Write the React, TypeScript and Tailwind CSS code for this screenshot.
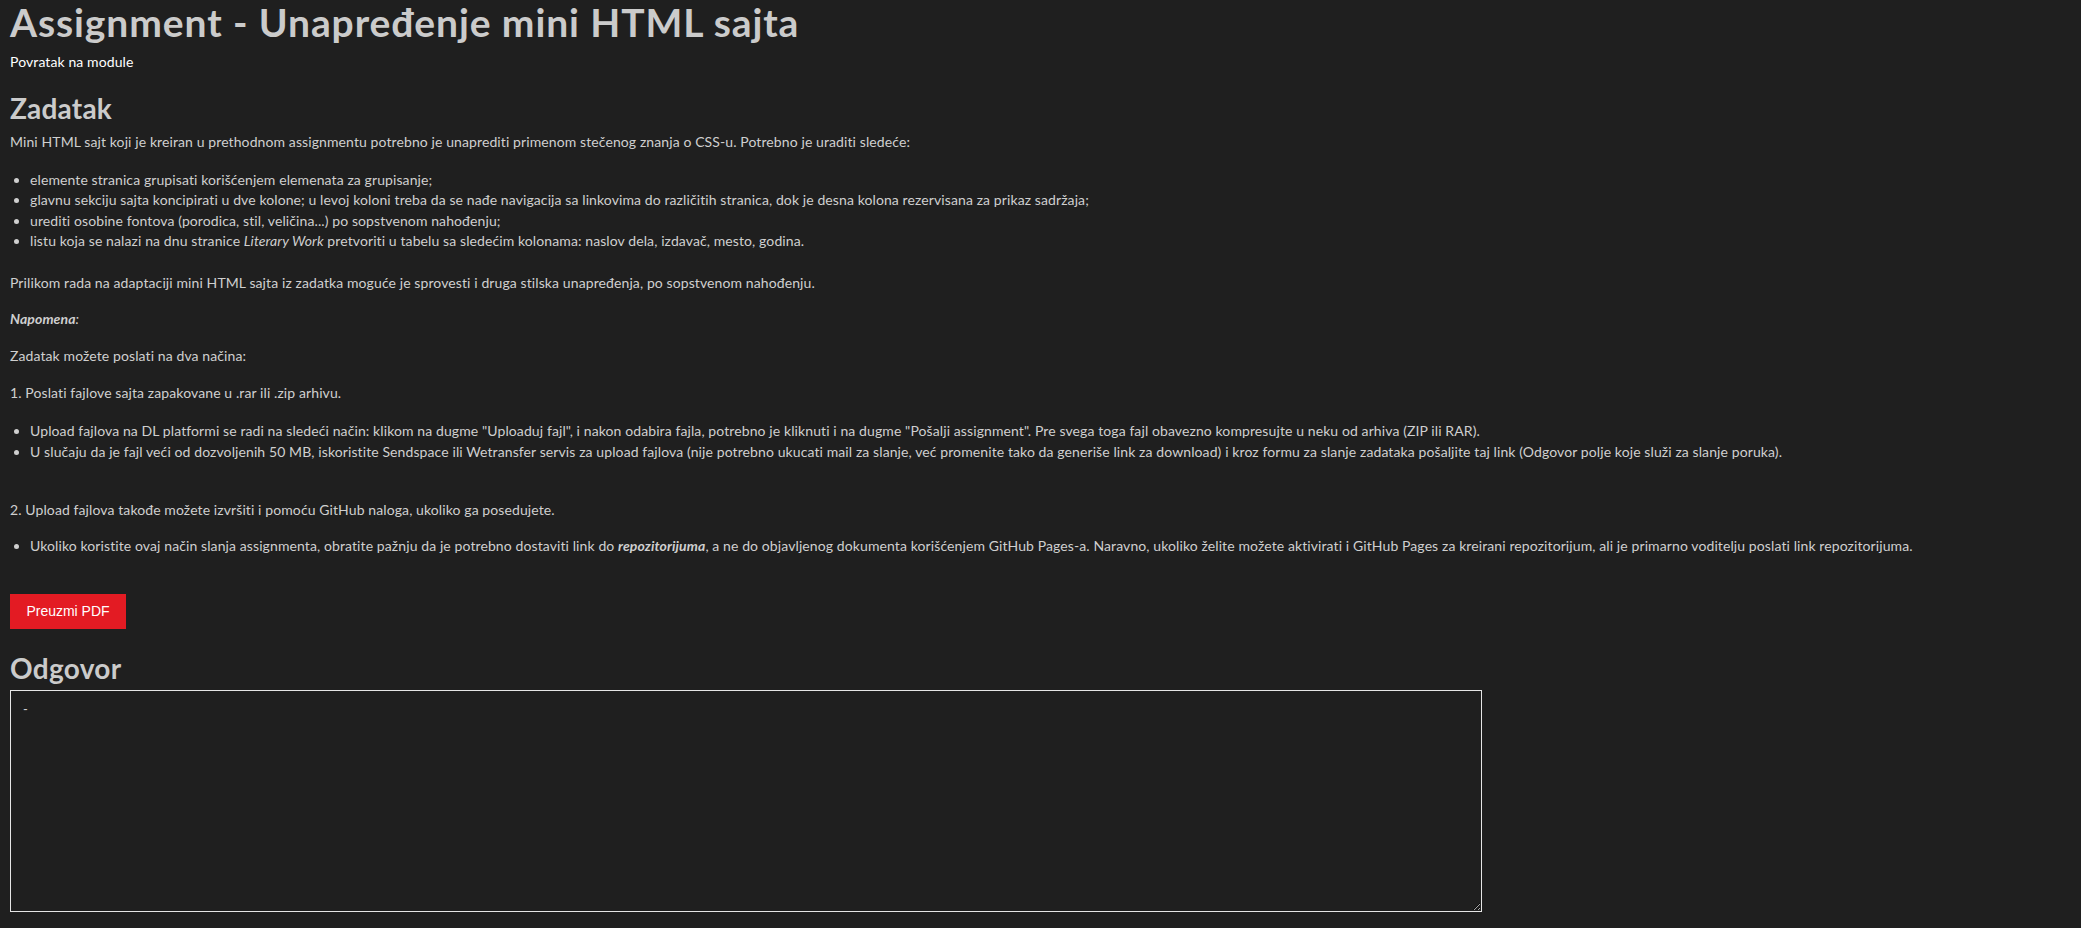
export default function App() {
  return (
    <div
      className="min-h-screen bg-[#1f1f1f] px-[10px] pb-4 text-[14px] leading-[20.5px] tracking-[0.1px] text-[#cfcfcf]"
      style={{ fontFamily: 'Lato, "Noto Sans", sans-serif' }}
    >
      <h1 className="text-[39px] font-bold leading-[44px] tracking-[0.9px] text-[#cbcbcb]">
        Assignment - Unapređenje mini HTML sajta
      </h1>
      <a href="#" className="mt-[8px] block text-[14px] leading-[20px] tracking-[0.1px] text-white">
        Povratak na module
      </a>

      {/* Zadatak */}
      <h2 className="mt-[19px] text-[28px] font-bold leading-[34px] tracking-[0.2px] text-[#cbcbcb]">Zadatak</h2>
      <p className="mt-[7px]">
        Mini HTML sajt koji je kreiran u prethodnom assignmentu potrebno je unaprediti primenom stečenog znanja o
        CSS-u. Potrebno je uraditi sledeće:
      </p>
      <ul className="mt-[17px] list-disc pl-[20px]">
        <li>elemente stranica grupisati korišćenjem elemenata za grupisanje;</li>
        <li>
          glavnu sekciju sajta koncipirati u dve kolone; u levoj koloni treba da se nađe navigacija sa linkovima do
          različitih stranica, dok je desna kolona rezervisana za prikaz sadržaja;
        </li>
        <li>urediti osobine fontova (porodica, stil, veličina...) po sopstvenom nahođenju;</li>
        <li>
          listu koja se nalazi na dnu stranice <em>Literary Work</em> pretvoriti u tabelu sa sledećim kolonama: naslov
          dela, izdavač, mesto, godina.
        </li>
      </ul>
      <p className="mt-[21px]">
        Prilikom rada na adaptaciji mini HTML sajta iz zadatka moguće je sprovesti i druga stilska unapređenja, po
        sopstvenom nahođenju.
      </p>
      <p className="mt-[15.5px]">
        <strong>
          <em>Napomena</em>
        </strong>
        <em>:</em>
      </p>
      <p className="mt-[16.5px]">Zadatak možete poslati na dva načina:</p>
      <p className="mt-[16.5px]">1. Poslati fajlove sajta zapakovane u .rar ili .zip arhivu.</p>
      <ul className="mt-[18px] list-disc pl-[20px]">
        <li>
          Upload fajlova na DL platformi se radi na sledeći način: klikom na dugme "Uploaduj fajl", i nakon odabira
          fajla, potrebno je kliknuti i na dugme "Pošalji assignment". Pre svega toga fajl obavezno kompresujte u neku
          od arhiva (ZIP ili RAR).
        </li>
        <li>
          U slučaju da je fajl veći od dozvoljenih 50 MB, iskoristite Sendspace ili Wetransfer servis za upload fajlova
          (nije potrebno ukucati mail za slanje, već promenite tako da generiše link za download) i kroz formu za slanje
          zadataka pošaljite taj link (Odgovor polje koje služi za slanje poruka).
        </li>
      </ul>
      <p className="mt-[38px]">2. Upload fajlova takođe možete izvršiti i pomoću GitHub naloga, ukoliko ga posedujete.</p>
      <ul className="mt-[15.5px] list-disc pl-[20px]">
        <li>
          Ukoliko koristite ovaj način slanja assignmenta, obratite pažnju da je potrebno dostaviti link do{' '}
          <strong>
            <em>repozitorijuma</em>
          </strong>
          , a ne do objavljenog dokumenta korišćenjem GitHub Pages-a. Naravno, ukoliko želite možete aktivirati i GitHub
          Pages za kreirani repozitorijum, ali je primarno voditelju poslati link repozitorijuma.
        </li>
      </ul>

      <button
        className="mt-[37px] flex h-[35px] w-[116px] items-center justify-center bg-[#e31b23] text-[14px] tracking-normal text-white"
        style={{ fontFamily: '"Liberation Sans", Arial, sans-serif' }}
      >
        Preuzmi PDF
      </button>

      {/* Odgovor */}
      <h2 className="mt-[22px] text-[28px] font-bold leading-[34px] tracking-[0.3px] text-[#cbcbcb]">Odgovor</h2>
      <textarea
        defaultValue="-"
        className="mt-[5px] block h-[222px] w-[1472px] border border-[#e6e6e6] bg-[#1f1f1f] px-[12px] py-[8px] text-[13px] text-[#cfcfcf] outline-none"
      />
    </div>
  );
}
